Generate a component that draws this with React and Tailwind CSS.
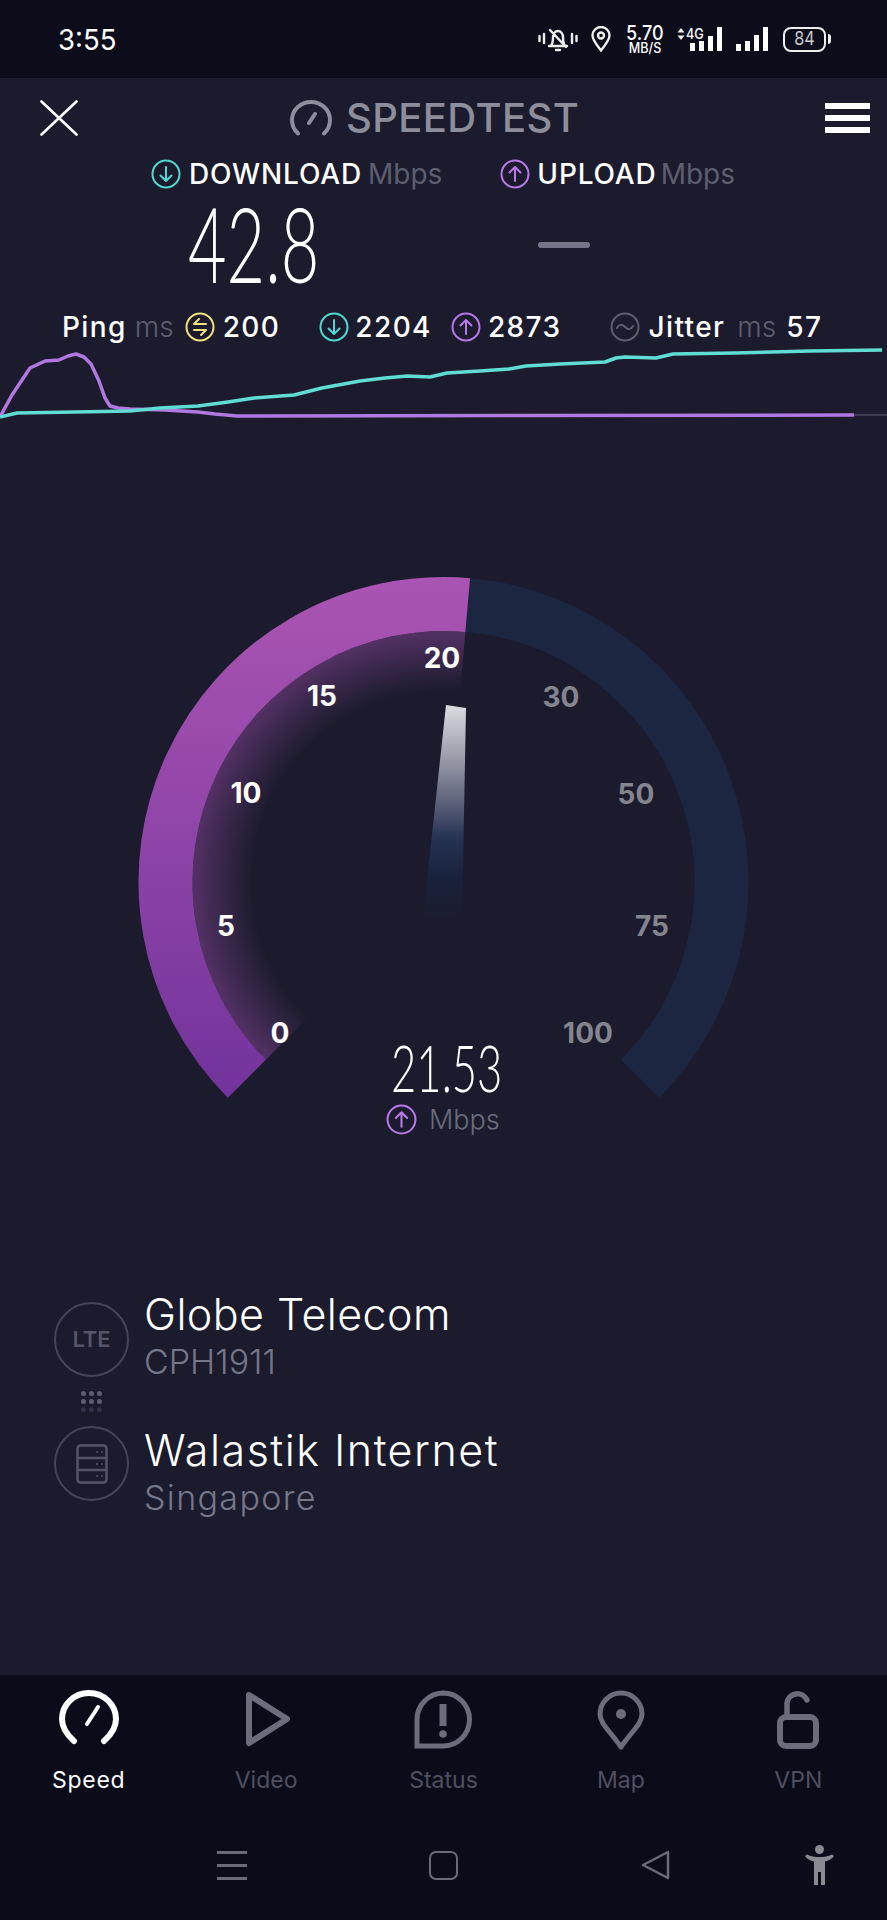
const TICKS = [
  { label: '0', x: 280, y: 1033, on: true },
  { label: '5', x: 226, y: 926, on: true },
  { label: '10', x: 246, y: 793, on: true },
  { label: '15', x: 322, y: 696, on: true },
  { label: '20', x: 442, y: 658, on: true },
  { label: '30', x: 561, y: 697 },
  { label: '50', x: 636, y: 794 },
  { label: '75', x: 652, y: 926 },
  { label: '100', x: 588, y: 1033 },
];

const PURPLE_LINE =
  'M0 417L12 395L30 368L45 361L59 360L68 356L76 354L84 357L91 364L99 381L105 398L110 406L118 408L130 409L165 410L198 412L215 414L237 416L854 415';
const TEAL_LINE =
  'M0 417L17 413L75 412L130 411L160 408L198 406L228 402L254 398L294 395L322 388L360 381L385 378L407 376L430 377L447 373L480 371L509 369L526 366L560 364L605 362L616 358L625 357L656 358L673 354L735 353L810 351L882 350';

function Arrow({ up, color, size = 30 }) {
  return (
    <svg width={size} height={size} viewBox="0 0 30 30" fill="none" stroke={color} strokeWidth="2" strokeLinecap="round" strokeLinejoin="round">
      <circle cx="15" cy="15" r="13.5" />
      {up ? <path d="M15 22V8M9.5 13.5L15 8l5.5 5.5" /> : <path d="M15 8v14M9.5 16.5L15 22l5.5-5.5" />}
    </svg>
  );
}

function StatusBar() {
  return (
    <div className="flex h-[78px] items-center justify-between bg-[#0c0c1b] pl-[58px] pr-[56px] text-white">
      <span className="text-[29px] leading-none origin-left scale-x-95">3:55</span>
      <div className="flex items-center">
        <svg width="40" height="26" viewBox="0 0 40 26" fill="none" stroke="#eee" strokeWidth="2.4" strokeLinecap="round" strokeLinejoin="round">
          <path d="M1.5 10v5M6 8v9M34 8v9M38.5 10v5" />
          <path d="M11 20h18M13 20c2-3 2-6 2-9 0-3 2-6 5-6s5 3 5 6c0 3 0 6 2 9M12 4l16 17M18 24h4" />
        </svg>
        <svg className="ml-[13px]" width="20" height="26" viewBox="0 0 20 26" fill="none" stroke="#eee" strokeWidth="2.4">
          <path d="M10 24.5C5 18 1.5 14 1.5 9.5a8.5 8.5 0 0 1 17 0C18.5 14 15 18 10 24.5z" />
          <circle cx="10" cy="9.5" r="3" />
        </svg>
        <div className="ml-[15px] flex w-[38px] flex-col items-center font-medium">
          <span className="text-[20px] leading-[17px] scale-x-90">5.70</span>
          <span className="text-[14px] leading-[12px] scale-x-90">MB/S</span>
        </div>
        <div className="relative ml-[12px] h-[26px] w-[46px]">
          <svg className="absolute left-0 top-[1px]" width="10" height="14" viewBox="0 0 10 14" fill="#eee">
            <path d="M5 1l3.5 4.5h-7zM5 13L1.5 8.5h7z" />
          </svg>
          <span className="absolute left-[9px] top-0 text-[14px] font-medium leading-[15px] scale-x-90">4G</span>
          <svg className="absolute left-[14px] top-0" width="32" height="26" viewBox="0 0 32 26" fill="#fff">
            <rect x="0" y="17" width="5" height="8" />
            <rect x="9" y="15" width="5" height="10" />
            <rect x="18" y="10" width="5" height="15" />
            <rect x="27" y="1" width="5" height="24" />
          </svg>
        </div>
        <svg className="ml-[14px]" width="32" height="26" viewBox="0 0 32 26" fill="#fff">
          <rect x="0" y="18" width="5" height="7" />
          <rect x="9" y="15" width="5" height="10" />
          <rect x="18" y="9" width="5" height="16" />
          <rect x="27" y="1" width="5" height="24" />
        </svg>
        <div className="ml-[15px] flex h-[25px] w-[43px] items-center justify-center rounded-[8px] border-[2.5px] border-[#eee] text-[18px] leading-none text-[#ccc]">
          <span className="scale-x-90">84</span>
        </div>
        <div className="ml-[2px] h-[10px] w-[3px] rounded-r-sm bg-[#eee]" />
      </div>
    </div>
  );
}

function Header() {
  return (
    <div className="flex h-[79px] items-center pl-[40px] pr-[17px]">
      <svg width="38" height="36" viewBox="0 0 38 36" stroke="#fff" strokeWidth="2.6" strokeLinecap="round">
        <path d="M1.5 1.5L36.5 34.5M36.5 1.5L1.5 34.5" />
      </svg>
      <svg className="ml-[212px]" width="42" height="36" viewBox="0 0 42 36" fill="none" stroke="#8d8d9c" strokeWidth="4" strokeLinecap="round">
        <path d="M8 33.5C3 29 2 23.5 2 20a19 18 0 0 1 38 0c0 3.5-1 9-6 13.5M25 14l-6 9" />
      </svg>
      <span className="ml-[14px] text-[40px] font-medium leading-none tracking-[0.01em] text-[#8d8d9c]">SPEEDTEST</span>
      <div className="ml-auto flex w-[45px] flex-col gap-[6px]">
        <div className="h-[6px] bg-white" />
        <div className="h-[6px] bg-white" />
        <div className="h-[6px] bg-white" />
      </div>
    </div>
  );
}

function Results() {
  return (
    <div>
      <div className="flex h-[33px] items-center text-[28px] leading-none">
        <div className="ml-[151px]"><Arrow color="#4fd9d0" /></div>
        <span className="ml-[8px] font-medium tracking-[0.03em] text-white">DOWNLOAD</span>
        <span className="ml-[6px] text-[#5e5e70]">Mbps</span>
        <div className="ml-[58px]"><Arrow up color="#b878e8" /></div>
        <span className="ml-[7px] font-medium tracking-[0.03em] text-white">UPLOAD</span>
        <span className="ml-[4px] text-[#5e5e70]">Mbps</span>
      </div>
      <div className="flex h-[110px] items-center">
        <div className="flex w-[508px] justify-center pb-[4px]">
          <span className="font-[Lato] text-[104px] font-light leading-none text-white scale-x-[0.64]">42.8</span>
        </div>
        <div className="ml-[30px] h-[6px] w-[52px] rounded-full bg-[#74748a]" />
      </div>
      <div className="mt-[10px] flex h-[34px] items-center pl-[62px] text-[28px] leading-none tracking-[0.05em] text-white">
        <span className="font-medium">Ping</span>
        <span className="ml-[8px] font-light tracking-normal text-[#5e5e70]">ms</span>
        <div className="ml-[11px]">
          <svg width="30" height="30" viewBox="0 0 30 30" fill="none" stroke="#f0e27a" strokeWidth="2" strokeLinecap="round" strokeLinejoin="round">
            <circle cx="15" cy="15" r="13.5" />
            <path d="M21 12H9l5-5M9 18h12l-5 5" />
          </svg>
        </div>
        <span className="ml-[8px] font-medium">200</span>
        <div className="ml-[39px]"><Arrow color="#4fd9d0" /></div>
        <span className="ml-[6px] font-medium">2204</span>
        <div className="ml-[19px]"><Arrow up color="#b878e8" /></div>
        <span className="ml-[7px] font-medium">2873</span>
        <div className="ml-[49px]">
          <svg width="30" height="30" viewBox="0 0 30 30" fill="none" stroke="#5e5e70" strokeWidth="2" strokeLinecap="round">
            <circle cx="15" cy="15" r="13.5" />
            <path d="M7 16c2-4 5-4 8-1s6 3 8-1" />
          </svg>
        </div>
        <span className="ml-[8px] font-medium">Jitter</span>
        <span className="ml-[12px] font-light tracking-normal text-[#5e5e70]">ms</span>
        <span className="ml-[10px] font-medium">57</span>
      </div>
    </div>
  );
}

function Chart() {
  return (
    <svg className="block" width="887" height="80" viewBox="0 344 887 80" fill="none" strokeWidth="3.5" strokeLinejoin="round">
      <path d="M854 415H887" stroke="#4a4a58" strokeWidth="1.5" />
      <path d={PURPLE_LINE} stroke="#b078e0" />
      <path d={TEAL_LINE} stroke="#5fdcd4" />
    </svg>
  );
}

function Gauge() {
  return (
    <div className="relative mt-[136px] h-[600px]">
      <svg className="block" width="887" height="600" viewBox="0 560 887 600" fill="none">
        <defs>
          <linearGradient id="fill" gradientUnits="userSpaceOnUse" x1="0" y1="590" x2="0" y2="1100">
            <stop offset="0" stopColor="#a954b2" />
            <stop offset="1" stopColor="#72339c" />
          </linearGradient>
          <radialGradient id="glow" gradientUnits="userSpaceOnUse" cx="443.5" cy="882" r="251">
            <stop offset="0.76" stopColor="#a04fb0" stopOpacity="0" />
            <stop offset="1" stopColor="#a04fb0" stopOpacity="0.42" />
          </radialGradient>
          <linearGradient id="needle" gradientUnits="userSpaceOnUse" x1="0" y1="705" x2="0" y2="920">
            <stop offset="0" stopColor="#dcdce0" />
            <stop offset="0.3" stopColor="#8b8d9d" />
            <stop offset="0.62" stopColor="#263253" />
            <stop offset="0.8" stopColor="#18223c" />
            <stop offset="1" stopColor="#1b1b2d" />
          </linearGradient>
        </defs>
        <path d="M467.7 605.1A278 278 0 0 1 640.1 1078.6" stroke="#1d2640" strokeWidth="54" />
        <path d="M443.5 882L266 1059.5A251 251 0 0 1 465.4 632Z" fill="url(#glow)" />
        <path d="M246.9 1078.6A278 278 0 0 1 467.7 605.1" stroke="url(#fill)" strokeWidth="54" />
        <path d="M446 705L466 708L462 920L423 918Z" fill="url(#needle)" />
        {TICKS.map((t) => (
          <text
            key={t.label}
            x={t.x}
            y={t.y + 10}
            textAnchor="middle"
            className={`text-[28px] font-bold ${t.on ? 'fill-white' : 'fill-[#85858f]'}`}
          >
            {t.label}
          </text>
        ))}
      </svg>
      <div className="absolute left-[386px] top-[474px] flex w-[120px] flex-col">
        <span className="ml-[-17px] w-[130px] text-center font-[Lato] text-[66px] font-light leading-[66px] text-white scale-x-[0.66]">21.53</span>
        <div className="mt-[4px] flex items-center">
          <Arrow up color="#b878e8" size={31} />
          <span className="ml-[12px] text-[27px] font-light leading-none text-[#6b6b7e]">Mbps</span>
        </div>
      </div>
    </div>
  );
}

function InfoRow({ title, sub, textClass, titleClass, subClass, children }) {
  return (
    <div className="flex h-[75px] items-center pl-[54px]">
      <div className="flex h-[75px] w-[75px] shrink-0 items-center justify-center rounded-full border-[2.5px] border-[#45455a]">
        {children}
      </div>
      <div className={`ml-[15px] flex flex-col ${textClass}`}>
        <span className={`text-[43px] font-light leading-[48px] text-white ${titleClass}`}>{title}</span>
        <span className={`text-[34px] font-light leading-[48px] text-[#77778a] ${subClass}`}>{sub}</span>
      </div>
    </div>
  );
}

function ServerInfo() {
  return (
    <div className="mt-[142px]">
      <InfoRow title="Globe Telecom" sub="CPH1911" textClass="mt-[-4px]" titleClass="tracking-[0.01em]" subClass="tracking-normal">
        <span className="text-[22px] font-semibold text-[#55556a]">LTE</span>
      </InfoRow>
      <div className="ml-[81px] grid h-[49px] w-[21px] grid-cols-3 content-center gap-[3px]">
        {[1, 1, 1, 1, 1, 1, 0, 0, 0].map((on, i) => (
          <div key={i} className={`h-[5px] w-[5px] rounded-full ${on ? 'bg-[#5e5e70]' : 'bg-[#33334a]'}`} />
        ))}
      </div>
      <InfoRow title="Walastik Internet" sub="Singapore" textClass="mt-[20px]" titleClass="tracking-[0.035em]" subClass="tracking-[0.04em]">
        <svg width="32" height="40" viewBox="0 0 32 40" fill="none" stroke="#55556a" strokeWidth="2.5">
          <rect x="1.5" y="1.5" width="29" height="37" rx="3" />
          <path d="M1.5 14h29M1.5 26h29" />
          <path d="M20 8h2M25 8h2M20 20h2M25 20h2M20 32h2M25 32h2" strokeWidth="1.5" />
        </svg>
      </InfoRow>
    </div>
  );
}

const TABS = [
  {
    label: 'Speed',
    active: true,
    icon: (
      <>
        <path d="M15 51C7 44 3 37 3 29a27 26 0 0 1 54 0c0 8-4 15-12 22" strokeWidth="6" strokeLinecap="round" />
        <path d="M39 17l-11 17" strokeWidth="4" strokeLinecap="round" />
      </>
    ),
  },
  {
    label: 'Video',
    icon: <path d="M13 5L51 29L13 53Z" strokeWidth="6" strokeLinejoin="round" />,
  },
  {
    label: 'Status',
    icon: (
      <>
        <path d="M30 3a26.5 26.5 0 0 1 0 53H4V29.5A26.5 26.5 0 0 1 30 3Z" strokeWidth="5" />
        <path d="M30 14v22" strokeWidth="7" />
        <circle cx="30" cy="44" r="3.8" fill="#6c6c7d" stroke="none" />
      </>
    ),
  },
  {
    label: 'Map',
    icon: (
      <>
        <path d="M30 57C20 42 9 34 9 24a21 21 0 0 1 42 0C51 34 40 42 30 57Z" strokeWidth="5" strokeLinejoin="round" />
        <circle cx="30" cy="24" r="5" fill="#6c6c7d" stroke="none" />
      </>
    ),
  },
  {
    label: 'VPN',
    icon: (
      <>
        <rect x="12" y="27" width="36" height="29" rx="6" strokeWidth="6" />
        <path d="M19 27V13a10.5 10.5 0 0 1 20-3" strokeWidth="5.5" strokeLinecap="round" />
      </>
    ),
  },
];

function TabBar() {
  return (
    <div className="grid grid-cols-5 pt-[15px]">
      {TABS.map((tab) => (
        <div key={tab.label} className="flex flex-col items-center">
          <svg width="60" height="60" viewBox="0 0 60 60" fill="none" stroke={tab.active ? '#fff' : '#6c6c7d'}>
            {tab.icon}
          </svg>
          <span className={`mt-[16px] text-[23px] leading-[28px] ${tab.active ? 'tracking-[0.03em] text-white' : 'text-[#4f4f60]'}`}>{tab.label}</span>
        </div>
      ))}
    </div>
  );
}

function NavBar() {
  return (
    <div className="mt-[56px] flex h-[30px] items-center pl-[217px]">
      <div className="flex w-[30px] flex-col gap-[10px]">
        <div className="h-[3px] bg-[#6a6a78]" />
        <div className="h-[3px] bg-[#6a6a78]" />
        <div className="h-[3px] bg-[#6a6a78]" />
      </div>
      <div className="ml-[182px] h-[29px] w-[29px] rounded-[7px] border-[2.5px] border-[#6a6a78]" />
      <svg className="ml-[183px]" width="29" height="30" viewBox="0 0 29 30" fill="none" stroke="#6a6a78" strokeWidth="2.5" strokeLinejoin="round">
        <path d="M27 2L2 15L27 28Z" />
      </svg>
      <svg className="ml-[134px]" width="31" height="40" viewBox="0 0 31 40" fill="#8a8a92">
        <circle cx="15.5" cy="4.5" r="4.5" />
        <path d="M1 11l2-1.5c4 2 8 2.500 12.5 2.500S24 11.500 28 9.500l2 1.500c-2 3-5 4.500-9 5.500V40h-4V27h-3v13h-4V16.500C6 15.500 3 14 1 11z" />
      </svg>
    </div>
  );
}

export default function App() {
  return (
    <div className="flex h-[1920px] w-[887px] flex-col overflow-hidden bg-[#1b1b2d] font-[Inter]">
      <StatusBar />
      <Header />
      <Results />
      <Chart />
      <Gauge />
      <ServerInfo />
      <div className="mt-auto h-[245px] bg-[#0b0b1a]">
        <TabBar />
        <NavBar />
      </div>
    </div>
  );
}
